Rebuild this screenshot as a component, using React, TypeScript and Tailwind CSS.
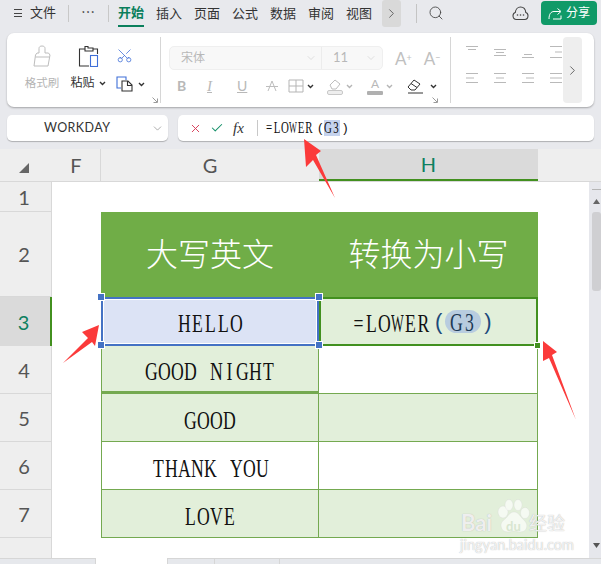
import { Check, ChevronDown, ChevronRight, Scissors, Search, X } from "lucide-react";

const latin = "font-['Lato','Noto_Sans_CJK_SC',sans-serif]";
const cjk = "font-['Liberation_Sans','Noto_Sans_CJK_SC',sans-serif]";
const serif = "font-['Liberation_Serif','Noto_Sans_CJK_SC',serif]";

const tabs = ["插入", "页面", "公式", "数据", "审阅", "视图"];

const Caret = ({ dark }: { dark?: boolean }) => (
  <svg width="7" height="5" viewBox="0 0 7 5" className="shrink-0">
    <path
      d="M1 1l2.5 2.5L6 1"
      fill="none"
      stroke={dark ? "#333" : "#b5b5b5"}
      strokeWidth="1.4"
    />
  </svg>
);

const Launcher = () => (
  <svg width="6" height="6" viewBox="0 0 6 6">
    <path d="M0.5 0.5L5 5M5.5 1.5v4h-4" fill="none" stroke="#9a9a9a" strokeWidth="1" />
  </svg>
);

const AlignIcon = ({ lines }: { lines: number[][] }) => (
  <svg width="14" height="14" viewBox="0 0 14 14">
    {lines.map(([x1, x2, y]) => (
      <path key={y} d={`M${x1} ${y}H${x2}`} stroke="#b9b9b9" strokeWidth="1" />
    ))}
  </svg>
);

const alignTop = [
  [[1, 13, 1.5], [3, 11, 4.5]],
  [[1, 13, 4.5], [3, 11, 7.5], [1, 13, 10.5]],
  [[3, 11, 9.5], [1, 13, 12.5]],
  [[1, 13, 1.5], [6, 13, 7], [1, 13, 12.5]],
];
const alignBottom = [
  [[1, 13, 2.5], [1, 9, 7], [1, 13, 11.5]],
  [[1, 13, 2.5], [3, 11, 7], [1, 13, 11.5]],
  [[1, 13, 2.5], [5, 13, 7], [1, 13, 11.5]],
  [[1, 13, 2.5], [1, 13, 7], [1, 13, 11.5]],
];

// the sheet font is half-width: every latin letter takes the same box
const CellText = ({ text, color = "text-[#111]" }: { text: string; color?: string }) => (
  <span className={`inline-flex text-[26px] leading-none ${color} ${serif}`}>
    {text.split("").map((c, i) => (
      <span
        key={i}
        className={`inline-block w-[13px] text-center whitespace-pre ${c === "W" ? "scale-x-[0.52]" : "scale-x-[0.68]"}`}
      >
        <span className="inline-block -mx-[6px]">{c}</span>
      </span>
    ))}
  </span>
);

const BarText = ({ text }: { text: string }) => (
  <span className={`inline-flex text-[16px] leading-none text-[#111] ${serif}`}>
    {text.split("").map((c, i) => (
      <span
        key={i}
        className={`inline-block w-[8px] text-center ${c === "W" ? "scale-x-[0.52]" : "scale-x-[0.68]"}`}
      >
        <span className="inline-block -mx-[4px]">{c}</span>
      </span>
    ))}
  </span>
);

const TopBar = () => (
  <div className={`h-[33px] flex items-start text-[13px] text-[#333] ${cjk}`}>
    <div className="ml-[14px] mt-[9px] w-[8px] flex flex-col gap-[2.5px]">
      <div className="h-px bg-[#444]" />
      <div className="h-px bg-[#444]" />
      <div className="h-px bg-[#444]" />
    </div>
    <span className="ml-[8px] mt-[3px] leading-[20px]">文件</span>
    <div className="ml-[12px] mt-[5px] w-px h-[17px] bg-[#c8c8c8]" />
    <span className="ml-[12px] mt-[2px] text-[14px] leading-[20px] tracking-[1px]">⋯</span>
    <div className="ml-[12px] mt-[5px] w-px h-[17px] bg-[#c8c8c8]" />
    <div className="ml-[9px] mt-[3px] w-[26px] h-[24px] border-b-2 border-[#0b7f5c] font-bold text-[#0b7f5c] leading-[20px]">
      开始
    </div>
    <div className="ml-[12px] mt-[4px] flex gap-[12px] leading-[20px]">
      {tabs.map((t) => (
        <span key={t} className="w-[26px]">
          {t}
        </span>
      ))}
    </div>
    <div className="ml-[10px] w-[19px] h-[27px] bg-[#d9d9d9] rounded-[3px] flex items-center justify-center">
      <ChevronRight size={15} strokeWidth={1.4} color="#555" />
    </div>
    <div className="ml-[15px] mt-[4px] w-px h-[19px] bg-[#c4c4c4]" />
    <Search size={16} strokeWidth={1.3} color="#444" className="ml-[11px] mt-[5px]" />
    <svg width="17" height="15" viewBox="0 0 17 15" className="ml-[68px] mt-[6px]">
      <path
        d="M4.5 13.5C2 13.5 1 11.5 1 9.8 1 8 2 6.8 3.3 6.5 3.6 3.3 5.8 1 8.5 1s5 2.200 5.300 5.500C15 6.800 16 8 16 9.800c0 1.700-1 3.700-3.500 3.700z"
        fill="none"
        stroke="#444"
        strokeWidth="1.100"
      />
      <circle cx="5.500" cy="9" r=".8" fill="#444" />
      <circle cx="8.500" cy="9" r=".8" fill="#444" />
      <circle cx="11.500" cy="9" r=".8" fill="#444" />
    </svg>
    <div className="ml-[12px] mt-px w-[56px] h-[24px] rounded-[4px] bg-[#109a68] flex items-center justify-center gap-[3px] text-white text-[12px]">
      <svg width="15" height="14" viewBox="0 0 15 14">
        <path
          d="M1 13c0-5 2-7.500 5-7.500h6M9.500 2.500l3.500 3-3.500 3M13 9.500V13H5"
          fill="none"
          stroke="#fff"
          strokeWidth="1"
        />
      </svg>
      分享
    </div>
  </div>
);

const Ribbon = () => (
  <div className="mx-[7px] h-[74px] bg-white rounded-[7px] shadow-[0_1px_2px_rgba(0,0,0,0.3)] flex relative">
    <div className="w-[154px] flex pl-[14px] border-r border-[#d6d6d6] my-[4px]">
      <div className="w-[42px] flex flex-col items-center pt-[8px]">
        <svg width="20" height="22" viewBox="0 0 20 22">
          <path
            d="M7 8V3.500C7 2 8 1 10 1s3 1 3 2.500V8h3.500L18 10l-2 11H2L3.500 10 5 8z"
            fill="none"
            stroke="#bdbdbd"
            strokeWidth="1"
          />
          <path d="M3.500 12h14" stroke="#bdbdbd" strokeWidth="1" />
        </svg>
        <span className={`mt-[8px] text-[11.5px] leading-[16px] whitespace-nowrap text-[#b4b4b4] ${cjk}`}>
          格式刷
        </span>
      </div>
      <div className="ml-[3px] w-[44px] flex flex-col items-center pt-[8px]">
        <svg width="21" height="22" viewBox="0 0 21 22">
          <path
            d="M7 4H1.500v17H11M15 4h4.500v5M7 4V1.500h3V3h5v3H7z"
            fill="none"
            stroke="#333"
            strokeWidth="1.100"
          />
          <rect x="12.500" y="10.500" width="7" height="11" fill="none" stroke="#3f6fd8" strokeWidth="1.100" />
        </svg>
        <div className="mt-[8px] flex items-center gap-[4px]">
          <span className={`text-[12px] leading-[16px] whitespace-nowrap text-[#333] ${cjk}`}>粘贴</span>
          <Caret dark />
        </div>
      </div>
      <div className="ml-[6px] flex flex-col items-start pt-[10px]">
        <Scissors size={17} strokeWidth={1.1} color="#3f6fd8" className="-rotate-90" />
        <div className="mt-[12px] flex items-center gap-[5px]">
          <svg width="17" height="16" viewBox="0 0 17 16">
            <path d="M5 12H1V1h9v3" fill="none" stroke="#3f6fd8" strokeWidth="1.100" />
            <path d="M6 5h6l4 4v6H6z" fill="none" stroke="#333" strokeWidth="1.100" />
            <path d="M11.500 5v4.500H16" fill="none" stroke="#333" strokeWidth="1.100" />
          </svg>
          <Caret dark />
        </div>
      </div>
      <div className="absolute left-[145px] top-[64px]">
        <Launcher />
      </div>
    </div>

    <div className="w-[290px] pl-[8px] pt-[10px] border-r border-[#d6d6d6] my-[4px] relative">
      <div className="flex items-center">
        <div className="w-[214px] h-[24px] -mt-px bg-[#f8f8f8] border border-[#efefef] rounded-[5px] flex items-center text-[#b8b8b8]">
          <div className={`w-[152px] h-full pl-[11px] pr-[4px] flex items-center justify-between text-[12px] border-r border-[#ececec] ${cjk}`}>
            宋体
            <ChevronDown size={12} strokeWidth={1} color="#c4c4c4" />
          </div>
          <div className={`flex-1 pl-[11px] pr-[5px] flex items-center justify-between text-[13px] ${latin}`}>
            11
            <ChevronDown size={12} strokeWidth={1} color="#c4c4c4" />
          </div>
        </div>
        <span className={`ml-[12px] text-[17px] leading-none text-[#c0c0c0] ${latin}`}>
          A<sup className="text-[9px]">+</sup>
        </span>
        <span className={`ml-[12px] text-[17px] leading-none text-[#c0c0c0] ${latin}`}>
          A<sup className="text-[9px]">−</sup>
        </span>
      </div>
      <div className="mt-[8px] pl-[8px] h-[16px] flex items-center">
        <span className={`w-[30px] text-[14px] font-bold leading-none text-[#b8b8b8] ${latin}`}>B</span>
        <span className="w-[30px] text-[15px] italic leading-none text-[#b8b8b8] font-['Liberation_Serif',serif] underline">
          I
        </span>
        <span className={`w-[28px] text-[14px] leading-none text-[#b8b8b8] underline ${latin}`}>U</span>
        <svg width="14" height="14" viewBox="0 0 14 14" className="mr-[9px]">
          <path d="M3 12l4-10 4 10M1 7.500h12" fill="none" stroke="#bdbdbd" strokeWidth="1" />
        </svg>
        <svg width="16" height="14" viewBox="0 0 16 14" className="mr-[3px]">
          <path d="M1 1h14v12H1zM8 1v12M1 7h14" fill="none" stroke="#b5b5b5" strokeWidth="1" />
        </svg>
        <Caret dark />
        <svg width="16" height="17" viewBox="0 0 16 17" className="ml-[13px] mr-[3px]">
          <path d="M3 7l5-5 5 4-4 5H5z" fill="none" stroke="#bdbdbd" strokeWidth="1" />
          <rect x="0.500" y="12.500" width="15" height="4" rx="1.500" fill="#eee" stroke="#c8c8c8" strokeWidth="1" />
        </svg>
        <Caret />
        <div className="ml-[14px] mr-[3px] w-[16px] flex flex-col items-center">
          <span className={`text-[12px] leading-[12px] text-[#b8b8b8] ${latin}`}>A</span>
          <div className="w-[16px] h-[4px] mt-px bg-[#b0b0b0] rounded-[1px]" />
        </div>
        <Caret />
        <svg width="17" height="16" viewBox="0 0 17 16" className="ml-[14px] mr-[6px]">
          <path d="M1 9l6-7 6 4-5 6H4z" fill="none" stroke="#333" strokeWidth="1" />
          <path d="M4 5.500l6 4" stroke="#333" strokeWidth="1" />
          <path d="M1 15h15" stroke="#333" strokeWidth="1" />
        </svg>
        <Caret dark />
      </div>
      <div className="absolute left-[271px] top-[60px]">
        <Launcher />
      </div>
    </div>

    <div className="pl-[14px] pt-[12px] flex flex-col gap-[12px]">
      <div className="flex gap-[14px]">
        {alignTop.map((l, i) => (
          <AlignIcon key={i} lines={l} />
        ))}
      </div>
      <div className="flex gap-[14px]">
        {alignBottom.map((l, i) => (
          <AlignIcon key={i} lines={l} />
        ))}
      </div>
    </div>
    <div className="absolute left-[556px] top-[4px] w-[19px] h-[66px] bg-[#eeeeee] rounded-[4px] flex items-center justify-center">
      <ChevronRight size={15} strokeWidth={1.4} color="#555" />
    </div>
  </div>
);

const FormulaRow = () => (
  <div className="mt-[8px] h-[26px] px-[7px] flex gap-[10px]">
    <div className={`w-[161px] bg-white rounded-[5px] shadow-[0_1px_1px_rgba(0,0,0,0.25)] flex items-center pl-[37px] pr-[4px] justify-between text-[12.5px] tracking-[0.4px] text-[#333] ${latin}`}>
      WORKDAY
      <ChevronDown size={13} strokeWidth={1.1} color="#777" />
    </div>
    <div className="flex-1 bg-white rounded-[5px] shadow-[0_1px_1px_rgba(0,0,0,0.25)] flex items-center pl-[11px]">
      <X size={13} strokeWidth={1.800} color="#d8405a" />
      <Check size={14} strokeWidth={1.800} color="#149069" className="ml-[8px]" />
      <span className="ml-[9px] w-[14px] text-[15px] italic leading-none text-[#333] font-['Liberation_Serif',serif]">
        fx
      </span>
      <div className="ml-[10px] w-px h-[16px] bg-[#c8c8c8]" />
      <div className={`ml-[7px] flex items-center text-[13px] leading-[16px] text-[#111] ${cjk}`}>
        <BarText text="=LOWER" />
        <span className="ml-[5px] font-light">(</span>
        <span className="ml-[2px] h-[16px] bg-[#c5d3ee] flex items-center">
          <BarText text="G3" />
        </span>
        <span className="ml-[3px] font-light">)</span>
      </div>
    </div>
  </div>
);

const ColumnHeader = () => (
  <div className={`mt-[8px] h-[33px] flex border-b border-[#d8d8d8] bg-[#eeeeee] text-[20px] text-[#555] ${latin}`}>
    <div className="w-[52px] flex items-center justify-center pl-[1px] pt-[5px]">
      <svg width="10" height="10" viewBox="0 0 10 10" className="-ml-[6px]">
        <path d="M10 0v10H0z" fill="#666" />
      </svg>
    </div>
    <div className="w-[49px] flex items-center justify-center border-r border-[#d8d8d8]">F</div>
    <div className="w-[218px] flex items-center justify-center">G</div>
    <div className="w-[219px] flex items-center justify-center bg-[#dadada] border-b-2 border-[#42901f] text-[#0e8060]">
      H
    </div>
  </div>
);

const rowHeads = [
  { n: "1", h: "h-[30px]" },
  { n: "2", h: "h-[85px]" },
  { n: "3", h: "h-[49px]", active: true },
  { n: "4", h: "h-[48px]" },
  { n: "5", h: "h-[48px]" },
  { n: "6", h: "h-[48px]" },
  { n: "7", h: "h-[48px]" },
];

const RowHeader = () => (
  <div className={`w-[52px] bg-[#eeeeee] border-r border-[#d8d8d8] text-[20px] text-[#555] ${latin}`}>
    {rowHeads.map((r) => (
      <div
        key={r.n}
        className={`${r.h} flex items-center justify-center pr-[3px] ${
          r.active
            ? "bg-[#dadada] text-[#0e8060] border-r-2 border-[#42901f] -mr-px"
            : "border-b border-[#d8d8d8]"
        }`}
      >
        {r.n}
      </div>
    ))}
  </div>
);

const rows = [
  { text: "GOOD NIGHT", left: "bg-[#e2efda] border-b-2", right: "bg-white" },
  { text: "GOOD", left: "bg-[#e2efda]", right: "bg-[#e2efda]" },
  { text: "THANK YOU", left: "bg-white", right: "bg-white" },
  { text: "LOVE", left: "bg-[#e2efda]", right: "bg-[#e2efda]" },
];

const Sheet = () => (
  <div className="flex-1 bg-white pl-[49px] pt-[30px]">
    <div className="w-[437px]">
      <div className={`h-[85px] bg-[#70ad47] flex items-center text-[32px] font-light text-white ${cjk}`}>
        <div className="w-[218px] text-center">大写英文</div>
        <div className="w-[219px] text-center">转换为小写</div>
      </div>
      <div className="h-[49px] flex">
        <div className="w-[218px] bg-[#dce3f5] border-2 border-[#4472c4] outline outline-white -outline-offset-3 flex items-center justify-center pt-[4px]">
          <CellText text="HELLO" />
        </div>
        <div className="w-[219px] bg-[#e2efda] border-2 border-[#42901f] pl-[31px] flex items-center pt-[4px]">
          <CellText text="=LOWER" />
          <span className={`text-[22px] font-light text-[#1b4a7a] -mt-[4px] ml-[5px] mr-[-1px] ${cjk}`}>(</span>
          <span className="-mt-[4px] ml-[4px] w-[36px] h-[23px] rounded-full bg-[#b8ccdf] flex items-center justify-center">
            <span className="pt-[3px]">
              <CellText text="G3" color="text-[#1d3a55]" />
            </span>
          </span>
          <span className={`text-[22px] font-light text-[#1b4a7a] -mt-[4px] ml-[3px] ${cjk}`}>)</span>
        </div>
      </div>
      {rows.map((r) => (
        <div key={r.text} className="h-[48px] flex border-b border-[#74a950]">
          <div className={`w-[218px] ${r.left} border-l border-r border-[#74a950] flex items-center justify-center pt-[6px]`}>
            <CellText text={r.text} />
          </div>
          <div className={`w-[219px] ${r.right} border-r border-[#74a950]`} />
        </div>
      ))}
    </div>
  </div>
);

const ScrollBar = () => (
  <div className="w-[12px] bg-[#e6e7ec] flex flex-col items-center pt-[7px] pl-[3px]">
    <div className="w-[9px] h-px bg-[#b5b5b5]" />
    <svg width="7" height="5" viewBox="0 0 7 5" className="mt-[9px]">
      <path d="M3.500 0L7 5H0z" fill="#666" />
    </svg>
    <div className="mt-[8px] w-[9px] h-[79px] bg-[#cfcfd2] rounded-[3px]" />
    <svg width="7" height="5" viewBox="0 0 7 5" className="mt-[252px]">
      <path d="M3.500 5L7 0H0z" fill="#555" />
    </svg>
  </div>
);

const BottomBar = () => (
  <div className="h-[6px] flex bg-[#e6e8ec]">
    <div className="w-[96px] border-t border-r border-[#d6d6d6]" />
    <div className="w-[71px] bg-white" />
    <div className="w-[48px] border-t border-l border-r border-[#d6d6d6]" />
    <div className="w-[65px] border-t border-r border-[#d6d6d6]" />
    <div className="flex-1 border-t border-[#d6d6d6]" />
  </div>
);

const mark = "[text-shadow:0_0_1px_#a8a8a8]";

// red arrows, selection handles and the watermark lie over the sheet
const Overlays = () => (
  <>
    <div className="absolute left-[97px] top-[293px] w-[8px] h-[8px] bg-[#4472c4] border border-white" />
    <div className="absolute left-[315px] top-[293px] w-[8px] h-[8px] bg-[#4472c4] border border-white" />
    <div className="absolute left-[97px] top-[341px] w-[8px] h-[8px] bg-[#4472c4] border border-white" />
    <div className="absolute left-[315px] top-[341px] w-[8px] h-[8px] bg-[#4472c4] border border-white" />
    <div className="absolute left-[534px] top-[342px] w-[7px] h-[7px] bg-[#42901f] border border-white" />
    <svg width="601" height="564" viewBox="0 0 601 564" className="absolute left-0 top-0 pointer-events-none">
      <path d="M304 139L321 151 316 155 335 198 313 160 306 167z" fill="#fb3a3a" />
      <path d="M99 325L82 332 88 338 63 363 92 342 95 346z" fill="#fb3a3a" />
      <path d="M543 341L557 352 552 355 576 420 549 358 543 361z" fill="#fb3a3a" />
      <g fill="#ffffff" fillOpacity="0.65" stroke="#cfcfcf" strokeOpacity="0.5" strokeWidth="0.5">
        <ellipse cx="503" cy="512" rx="5" ry="6" />
        <ellipse cx="509" cy="505" rx="4" ry="5.500" />
        <ellipse cx="518" cy="505" rx="4" ry="5.500" />
        <ellipse cx="525" cy="513" rx="4.500" ry="5.500" />
        <path d="M514 512c-5 0-6 5-9 7-4 3-5 6-3 10s8 3 12 2c4 1 10 2 12-2s0-7-3-10c-3-2-4-7-9-7z" />
      </g>
    </svg>
    <div className={`absolute left-[461px] top-[511px] text-[22px] font-bold leading-[24px] text-white/80 ${mark} ${latin}`}>
      Bai
    </div>
    <div className={`absolute left-[506px] top-[519px] text-[13px] font-bold leading-[14px] text-[#d8e6d0] ${latin}`}>
      du
    </div>
    <div className={`absolute left-[529px] top-[513px] text-[18px] leading-[22px] text-white/80 ${mark} ${cjk}`}>
      经验
    </div>
    <div className={`absolute left-[460px] top-[537px] text-[14.500px] leading-[16px] text-white/80 ${mark} ${latin}`}>
      jingyan.baidu.com
    </div>
  </>
);

export default function App() {
  return (
    <div className="relative w-[601px] h-[564px] overflow-hidden bg-[#e8e9ed] flex flex-col">
      <TopBar />
      <Ribbon />
      <FormulaRow />
      <ColumnHeader />
      <div className="flex-1 flex min-h-0">
        <RowHeader />
        <Sheet />
        <ScrollBar />
      </div>
      <BottomBar />
      <Overlays />
    </div>
  );
}
